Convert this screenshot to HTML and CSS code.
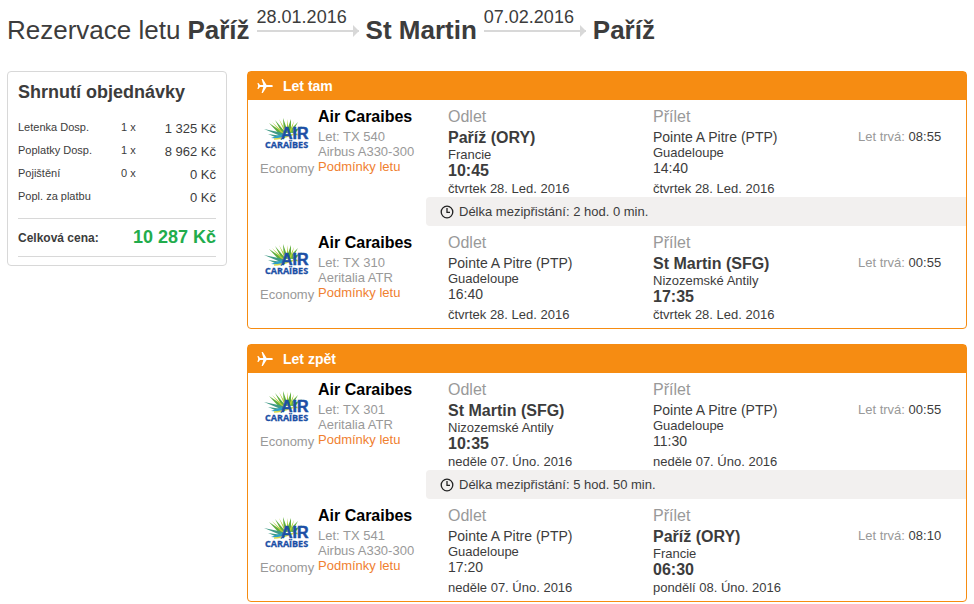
FILE: index.html
```
<!DOCTYPE html>
<html lang="cs">
<head>
  <meta charset="utf-8">
  <title>Rezervace letu</title>
  <link rel="stylesheet" href="styles.css">
</head>
<body>

  <svg class="sprite" aria-hidden="true">
    <symbol id="plane" viewBox="0 0 16 16">
      <path fill="#fff" d="M16 8c0-.7-1-1.100-2.200-1.100H9.600L5.800 1H4.600L6.300 6.900H3L1.400 5H.4L1.200 8 .4 11h1L3 9.100h3.300L4.600 15h1.200L9.600 9.100h4.200C15 9.100 16 8.700 16 8z"/>
    </symbol>
    <symbol id="clock" viewBox="0 0 14 14">
      <circle cx="7" cy="7" r="5.800" fill="none" stroke="#222" stroke-width="1.300"/>
      <path d="M7 3v4.400h3" fill="none" stroke="#222" stroke-width="1.300"/>
    </symbol>
    <symbol id="logo" viewBox="0 0 46 32">
      <path fill="#5fae3c" d="M18 19L5 5l15 10zM19 17L11 2l11 13zM20 15L19 0l5 14zM22 15L27 1l0 13zM24 14l10-10-6 11zM27 14l11-6-8 8z"/>
      <path fill="#b5cc3a" d="M19 17L8 4l12 11zM21 15L15 1l7 12zM23 14L23 1l2 13zM25 14l5-11-3 12z"/>
      <path fill="#3f9a86" d="M19 19L0 11l19 4zM18 22L4 16l14 2z"/>
      <path fill="#2c9fc8" d="M18 21L7 20l11-4z"/>
      <path fill="none" stroke="#d5d84a" stroke-width="1.500" d="M10 21c7 0 12-2 17-4 4-1 6-1 8 0"/>
      <text x="17" y="21" class="logo-air">AIR</text>
      <text x="1" y="30" class="logo-name">CARAÏBES</text>
    </symbol>
  </svg>

  <h1 class="route">
    <span class="intro">Rezervace letu</span>
    <span>Paříž</span>
    <span class="arrow">28.01.2016</span>
    <span>St Martin</span>
    <span class="arrow">07.02.2016</span>
    <span>Paříž</span>
  </h1>

  <div class="page">

    <aside class="summary">
      <h2>Shrnutí objednávky</h2>
      <table>
        <tbody>
          <tr><th scope="row">Letenka Dosp.</th><td class="count">1 x</td><td class="price">1 325 Kč</td></tr>
          <tr><th scope="row">Poplatky Dosp.</th><td class="count">1 x</td><td class="price">8 962 Kč</td></tr>
          <tr><th scope="row">Pojištění</th><td class="count">0 x</td><td class="price">0 Kč</td></tr>
          <tr><th scope="row">Popl. za platbu</th><td class="count"></td><td class="price">0 Kč</td></tr>
        </tbody>
      </table>
      <div class="total">
        <span>Celková cena:</span>
        <strong>10 287 Kč</strong>
      </div>
    </aside>

    <main class="flights">

      <section class="flight">
        <h3><svg class="plane"><use href="#plane"/></svg>Let tam</h3>

        <div class="segment">
          <div class="class">
            <svg class="logo"><use href="#logo"/></svg>
            Economy
          </div>
          <div class="carrier">
            <h4>Air Caraibes</h4>
            <p>Let: TX 540</p>
            <p>Airbus A330-300</p>
            <a href="#">Podmínky letu</a>
          </div>
          <div class="stop main-stop">
            <h5>Odlet</h5>
            <p class="place">Paříž (ORY)</p>
            <p class="country">Francie</p>
            <p class="time">10:45</p>
            <p class="date">čtvrtek 28. Led. 2016</p>
          </div>
          <div class="stop">
            <h5>Přílet</h5>
            <p class="place">Pointe A Pitre (PTP)</p>
            <p class="country">Guadeloupe</p>
            <p class="time">14:40</p>
            <p class="date">čtvrtek 28. Led. 2016</p>
          </div>
          <p class="duration">Let trvá: <span>08:55</span></p>
        </div>

        <div class="layover"><svg class="clock"><use href="#clock"/></svg>Délka mezipřistání: 2 hod. 0 min.</div>

        <div class="segment">
          <div class="class">
            <svg class="logo"><use href="#logo"/></svg>
            Economy
          </div>
          <div class="carrier">
            <h4>Air Caraibes</h4>
            <p>Let: TX 310</p>
            <p>Aeritalia ATR</p>
            <a href="#">Podmínky letu</a>
          </div>
          <div class="stop">
            <h5>Odlet</h5>
            <p class="place">Pointe A Pitre (PTP)</p>
            <p class="country">Guadeloupe</p>
            <p class="time">16:40</p>
            <p class="date">čtvrtek 28. Led. 2016</p>
          </div>
          <div class="stop main-stop">
            <h5>Přílet</h5>
            <p class="place">St Martin (SFG)</p>
            <p class="country">Nizozemské Antily</p>
            <p class="time">17:35</p>
            <p class="date">čtvrtek 28. Led. 2016</p>
          </div>
          <p class="duration">Let trvá: <span>00:55</span></p>
        </div>
      </section>

      <section class="flight">
        <h3><svg class="plane"><use href="#plane"/></svg>Let zpět</h3>

        <div class="segment">
          <div class="class">
            <svg class="logo"><use href="#logo"/></svg>
            Economy
          </div>
          <div class="carrier">
            <h4>Air Caraibes</h4>
            <p>Let: TX 301</p>
            <p>Aeritalia ATR</p>
            <a href="#">Podmínky letu</a>
          </div>
          <div class="stop main-stop">
            <h5>Odlet</h5>
            <p class="place">St Martin (SFG)</p>
            <p class="country">Nizozemské Antily</p>
            <p class="time">10:35</p>
            <p class="date">neděle 07. Úno. 2016</p>
          </div>
          <div class="stop">
            <h5>Přílet</h5>
            <p class="place">Pointe A Pitre (PTP)</p>
            <p class="country">Guadeloupe</p>
            <p class="time">11:30</p>
            <p class="date">neděle 07. Úno. 2016</p>
          </div>
          <p class="duration">Let trvá: <span>00:55</span></p>
        </div>

        <div class="layover"><svg class="clock"><use href="#clock"/></svg>Délka mezipřistání: 5 hod. 50 min.</div>

        <div class="segment">
          <div class="class">
            <svg class="logo"><use href="#logo"/></svg>
            Economy
          </div>
          <div class="carrier">
            <h4>Air Caraibes</h4>
            <p>Let: TX 541</p>
            <p>Airbus A330-300</p>
            <a href="#">Podmínky letu</a>
          </div>
          <div class="stop">
            <h5>Odlet</h5>
            <p class="place">Pointe A Pitre (PTP)</p>
            <p class="country">Guadeloupe</p>
            <p class="time">17:20</p>
            <p class="date">neděle 07. Úno. 2016</p>
          </div>
          <div class="stop main-stop">
            <h5>Přílet</h5>
            <p class="place">Paříž (ORY)</p>
            <p class="country">Francie</p>
            <p class="time">06:30</p>
            <p class="date">pondělí 08. Úno. 2016</p>
          </div>
          <p class="duration">Let trvá: <span>08:10</span></p>
        </div>
      </section>

    </main>
  </div>

</body>
</html>
```
FILE: styles.css
```
* {
  box-sizing: border-box;
  margin: 0;
  padding: 0;
}

body {
  padding: 0 7px;
  background: #fff;
  color: #3c3c3c;
  font-family: "Liberation Sans", Arial, sans-serif;
  font-size: 13px;
}

.sprite {
  display: none;
}

/* route heading */
.route {
  display: flex;
  gap: 7px;
  height: 71px;
  padding-top: 15px;
  font-size: 26px;
  line-height: 30px;
}

.route .intro {
  font-weight: normal;
}

.route .arrow {
  position: relative;
  width: 102px;
  height: 17px;
  border-bottom: 2px solid #d8d8d8;
  font-size: 18px;
  font-weight: normal;
  line-height: 4px;
}

.route .arrow::after {
  content: "";
  position: absolute;
  right: 0;
  bottom: -7px;
  border: 6px solid transparent;
  border-right: 0;
  border-left-color: #d8d8d8;
}

.page {
  display: flex;
  align-items: flex-start;
  gap: 20px;
}

/* order summary */
.summary {
  flex: 0 0 220px;
  padding: 9px 10px 8px;
  border: 1px solid #d8d8d8;
  border-radius: 4px;
}

.summary h2 {
  margin-bottom: 17px;
  font-size: 18px;
  line-height: 22px;
}

.summary table {
  width: 100%;
  border-collapse: collapse;
}

.summary tr {
  height: 23px;
}

.summary th,
.summary td {
  font-size: 11px;
  font-weight: normal;
  line-height: 15px;
  text-align: left;
  vertical-align: top;
}

.summary th {
  width: 103px;
}

.summary .price {
  font-size: 13px;
  line-height: 17px;
  text-align: right;
}

.total {
  display: flex;
  justify-content: space-between;
  align-items: center;
  height: 39px;
  margin-top: 6px;
  border: solid #d8d8d8;
  border-width: 1px 0;
  font-size: 12px;
  font-weight: bold;
}

.total strong {
  color: #22ac4c;
  font-size: 18px;
}

/* flights */
.flights {
  flex: 1;
}

.flight {
  margin-bottom: 15px;
  border: 1px solid #f68c12;
  border-radius: 4px;
}

.flight:last-child {
  margin-bottom: 0;
}

.flight h3 {
  display: flex;
  align-items: center;
  gap: 10px;
  height: 28px;
  padding-left: 9px;
  background: #f68c12;
  color: #fff;
  font-size: 14px;
}

.plane {
  width: 16px;
  height: 16px;
}

.segment {
  display: grid;
  grid-template-columns: 70px 130px 1fr 1fr 108px;
  padding-top: 7px;
}

.segment:last-child {
  padding-bottom: 5px;
}

.class {
  padding: 11px 0 0 12px;
  color: #999;
  line-height: 15px;
}

.logo {
  display: block;
  width: 46px;
  height: 32px;
  margin: 0 0 11px 4px;
}

.logo-air {
  fill: #1b4fa5;
  stroke: #1b4fa5;
  stroke-width: .5px;
  font: bold 16px "Liberation Sans", sans-serif;
}

.logo-name {
  fill: #1b4fa5;
  stroke: #1b4fa5;
  stroke-width: .3px;
  font: bold 9px "Open Sans", "Liberation Sans", sans-serif;
}

.carrier {
  color: #999;
  line-height: 15px;
}

.carrier h4 {
  margin-bottom: 2px;
  color: #000;
  font-size: 16px;
  line-height: 20px;
}

.carrier a {
  color: #f08030;
  text-decoration: none;
}

.stop h5 {
  color: #999;
  font-size: 16px;
  font-weight: normal;
  line-height: 20px;
}

.place {
  font-size: 14px;
  line-height: 20px;
}

.country {
  margin-top: -1px;
  line-height: 14px;
}

.time {
  font-size: 14px;
  line-height: 16px;
}

.date {
  margin-top: 5px;
  line-height: 16px;
}

.main-stop .place,
.main-stop .time {
  font-size: 16px;
  font-weight: bold;
}

.main-stop .place {
  line-height: 22px;
}

.main-stop .time {
  line-height: 18px;
}

.main-stop .date {
  margin-top: 1px;
}

.duration {
  padding-top: 22px;
  color: #999;
  line-height: 15px;
}

.duration span {
  color: #3c3c3c;
}

.layover {
  display: flex;
  align-items: center;
  gap: 5px;
  height: 29px;
  margin-left: 178px;
  padding-left: 14px;
  border-radius: 4px 0 0 4px;
  background: #f2f0ef;
}

.clock {
  width: 14px;
  height: 14px;
}
```
